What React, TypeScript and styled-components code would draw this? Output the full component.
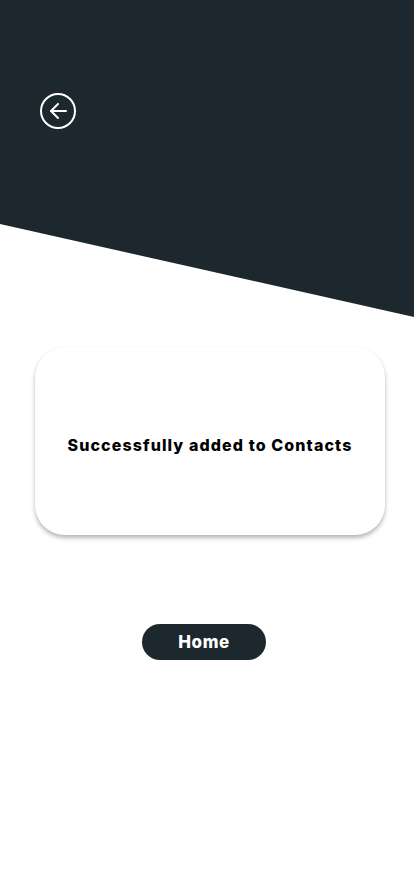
import React from "react";
import styled, { createGlobalStyle } from "styled-components";

const Global = createGlobalStyle`
  html, body { margin: 0; padding: 0; background: #ffffff; }
  body { font-family: "Inter", "Noto Sans", sans-serif; }
`;

const Page = styled.div`
  width: 414px;
  min-height: 896px;
  background: #ffffff;
  display: flex;
  flex-direction: column;
`;

const Header = styled.header`
  height: 317px;
  background: #1d272e;
  clip-path: polygon(0 0, 100% 0, 100% 100%, 0 224px);
  padding: 93px 0 0 40px;
  box-sizing: border-box;
`;

const BackButton = styled.button`
  width: 36px;
  height: 36px;
  padding: 0;
  border: none;
  background: transparent;
  display: flex;
  align-items: center;
  justify-content: center;
  cursor: pointer;
`;

const Card = styled.section`
  margin: 30px 0 0 35px;
  width: 350px;
  height: 188px;
  box-sizing: border-box;
  padding-top: 8px;
  border-radius: 30px;
  background: #ffffff;
  box-shadow: 0 3px 4px rgba(0, 0, 0, 0.28), 0 0 1px rgba(0, 0, 0, 0.06);
  display: flex;
  align-items: center;
  justify-content: center;
`;

const Message = styled.p`
  margin: 0;
  font-family: "Inter", sans-serif;
  font-weight: 800;
  font-size: 16px;
  color: #000000;
  letter-spacing: 1.1px;
`;

const Actions = styled.div`
  margin-top: 89px;
  display: flex;
  justify-content: center;
`;

const HomeButton = styled.button`
  width: 124px;
  height: 36px;
  border-radius: 18px;
  border: none;
  background: #1d272e;
  color: #ffffff;
  font-family: "Inter", sans-serif;
  font-weight: 800;
  font-size: 17px;
  letter-spacing: 0.6px;
  cursor: pointer;
  margin-right: 6px;
`;

export default function App() {
  return (
    <>
      <Global />
      <Page>
        <Header>
          <BackButton aria-label="Back">
            <svg width="36" height="36" viewBox="0 0 36 36" fill="none" stroke="#ffffff" strokeWidth="2" strokeLinecap="round" strokeLinejoin="round">
              <circle cx="18" cy="18" r="17" />
              <path d="M26 18H11" />
              <path d="M18 11l-7 7 7 7" />
            </svg>
          </BackButton>
        </Header>
        <Card>
          <Message>Successfully added to Contacts</Message>
        </Card>
        <Actions>
          <HomeButton>Home</HomeButton>
        </Actions>
      </Page>
    </>
  );
}
